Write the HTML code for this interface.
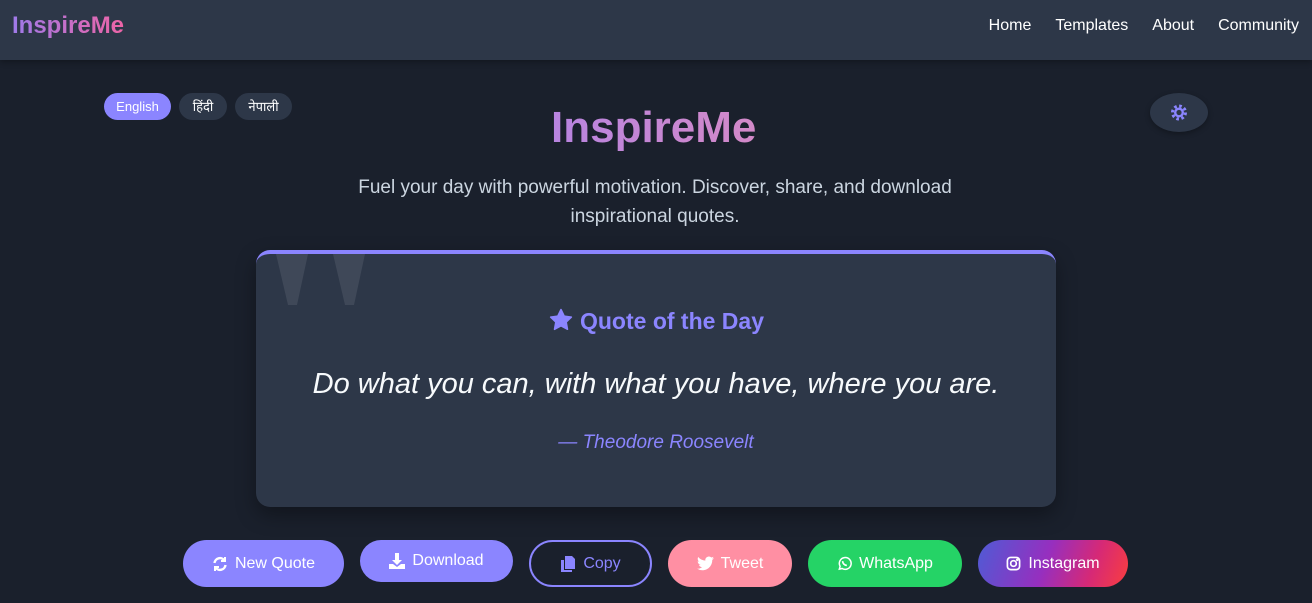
<!DOCTYPE html>
<html><head><meta charset="utf-8"><style>
*{box-sizing:border-box;margin:0;padding:0}
body{width:1312px;height:603px;overflow:hidden;background:#1a202c;font-family:"Liberation Sans","Noto Sans CJK SC",sans-serif;color:#e2e8f0;position:relative}
.hdr{position:absolute;left:0;top:0;width:1312px;height:60px;background:#2d3748;box-shadow:0 2px 6px rgba(0,0,0,.3)}
.logo{position:absolute;left:12px;top:12px;font-size:24px;font-weight:bold;background:linear-gradient(90deg,#9f7aea,#ed64a6);-webkit-background-clip:text;background-clip:text;color:transparent}
.nav{position:absolute;right:13px;top:17px;font-size:16px;color:#fff}
.nav span{margin-left:24px}
.lang{position:absolute;top:93px;height:27px;border-radius:14px;background:#2d3748;color:#fff;font-size:13px;line-height:27px;text-align:center}
.title{position:absolute;top:103px;font-size:44px;font-weight:bold;background:linear-gradient(90deg,#b884e0,#d389c8);-webkit-background-clip:text;background-clip:text;color:transparent;left:551px}
.sub{position:absolute;left:320px;width:670px;top:173px;text-align:center;font-size:19px;line-height:29px;color:#cbd5e0}
.gear{position:absolute;left:1150px;top:93px;width:58px;height:39px;border-radius:50%;background:#2d3748;box-shadow:0 2px 6px rgba(0,0,0,.3)}
.card{position:absolute;left:256px;top:250px;width:800px;height:257px;background:#2d3748;border-radius:14px;border-top:4px solid #8b85ff;box-shadow:0 8px 20px rgba(0,0,0,.35);overflow:hidden}
.qd{position:absolute;left:0;width:800px;top:54px;text-align:center;font-size:23px;font-weight:bold;color:#8b85ff}
.q{position:absolute;left:0;width:800px;top:114px;text-align:center;font-size:29px;font-style:italic;color:#f7fafc}
.a{position:absolute;left:0;width:800px;top:178px;text-align:center;font-size:19px;font-style:italic;color:#8b85ff}
.b{position:absolute;top:540px;height:47px;border-radius:24px;color:#fff;font-size:16px;display:flex;align-items:center;justify-content:center;gap:7px}
</style></head><body>
<div class="hdr"><div class="logo">InspireMe</div>
<div class="nav"><span>Home</span><span>Templates</span><span>About</span><span>Community</span></div></div>
<div class="lang" style="left:104px;width:67px;background:#8b85ff">English</div>
<div class="lang" style="left:179px;width:48px">हिंदी</div>
<div class="lang" style="left:235px;width:57px">नेपाली</div>
<div class="title">InspireMe</div>
<div class="sub">Fuel your day with powerful motivation. Discover, share, and download inspirational quotes.</div>
<div class="gear"><svg width="58" height="39" viewBox="0 0 58 39"><circle cx="29" cy="19.5" r="6.5" fill="none" stroke="#8b85ff" stroke-width="3" stroke-dasharray="2.6 2.5"/><circle cx="29" cy="19.5" r="5" fill="#8b85ff"/><circle cx="29" cy="19.5" r="2.6" fill="#2d3748"/></svg></div>
<div class="card">
<svg style="position:absolute;left:20px;top:0" width="100" height="55"><path d="M0 0h32l-11 51h-9z M57 0h32l-11 51h-9z" fill="#3f4858"/></svg>
<div class="qd"><svg width="26" height="24" viewBox="0 0 24 24" style="vertical-align:-3px;margin-right:6px"><path d="M12 1.5l3.2 6.6 7.2 1-5.2 5 1.3 7.2L12 17.8l-6.5 3.5 1.3-7.2-5.2-5 7.2-1z" fill="#8b85ff" stroke="#8b85ff" stroke-linejoin="round" stroke-width="1.5"/></svg>Quote of the Day</div>
<div class="q">Do what you can, with what you have, where you are.</div>
<div class="a">— Theodore Roosevelt</div>
</div>
<div class="b" style="left:183px;width:161px;background:#8b85ff"><svg width="16" height="16" viewBox="0 0 16 16" fill="none" stroke="#fff" stroke-width="2.4"><path d="M2.5 7a5.5 5.5 0 0 1 10-2.5M13.5 9a5.5 5.5 0 0 1-10 2.5"/><path d="M13 1v4H9M3 15v-4h4" stroke-width="2"/></svg>New Quote</div>
<div class="b" style="left:360px;width:153px;height:42px;background:#8b85ff"><svg width="16" height="16" viewBox="0 0 16 16" fill="#fff"><path d="M6 0h4v7h3l-5 5-5-5h3z"/><path d="M0 11h4l4 3 4-3h4v5H0z"/></svg>Download</div>
<div class="b" style="left:529px;width:123px;border:2px solid #8b85ff;color:#8b85ff"><svg width="16" height="16" viewBox="0 0 16 16" fill="#8b85ff"><path d="M5 0h7l3 3v10H5z"/><path d="M1 4h3v10h8v2H1z"/></svg>Copy</div>
<div class="b" style="left:668px;width:124px;background:#ff8fa3"><svg width="17" height="15" viewBox="0 0 24 20" fill="#fff"><path d="M24 2.4a10 10 0 0 1-2.8.8A5 5 0 0 0 23.3.4a10 10 0 0 1-3.1 1.2A5 5 0 0 0 11.8 6 14 14 0 0 1 1.7.9a5 5 0 0 0 1.5 6.6A5 5 0 0 1 1 6.9a5 5 0 0 0 3.9 4.8 5 5 0 0 1-2.2.1 5 5 0 0 0 4.6 3.4A10 10 0 0 1 0 17.3 14 14 0 0 0 7.5 19.5c9 0 14-7.5 14-14v-.6A10 10 0 0 0 24 2.4z"/></svg>Tweet</div>
<div class="b" style="left:808px;width:154px;background:#25d366"><svg width="15" height="15" viewBox="0 0 16 16" fill="none" stroke="#fff" stroke-width="1.6"><path d="M2.5 14l.8-3A6.3 6.3 0 1 1 5.5 13.3z"/><path d="M6 5.5c0 2.5 2 4.5 4.5 4.5" stroke-width="1.8"/></svg>WhatsApp</div>
<div class="b" style="left:978px;width:150px;background:linear-gradient(110deg,#4f5bd5 0%,#962fbf 45%,#d62976 75%,#fa3e3e 100%)"><svg width="15" height="15" viewBox="0 0 16 16" fill="none" stroke="#fff" stroke-width="1.8"><rect x="1.5" y="1.5" width="13" height="13" rx="3.5"/><circle cx="8" cy="8" r="3"/><circle cx="12" cy="4" r=".5" fill="#fff"/></svg>Instagram</div>
</body></html>
